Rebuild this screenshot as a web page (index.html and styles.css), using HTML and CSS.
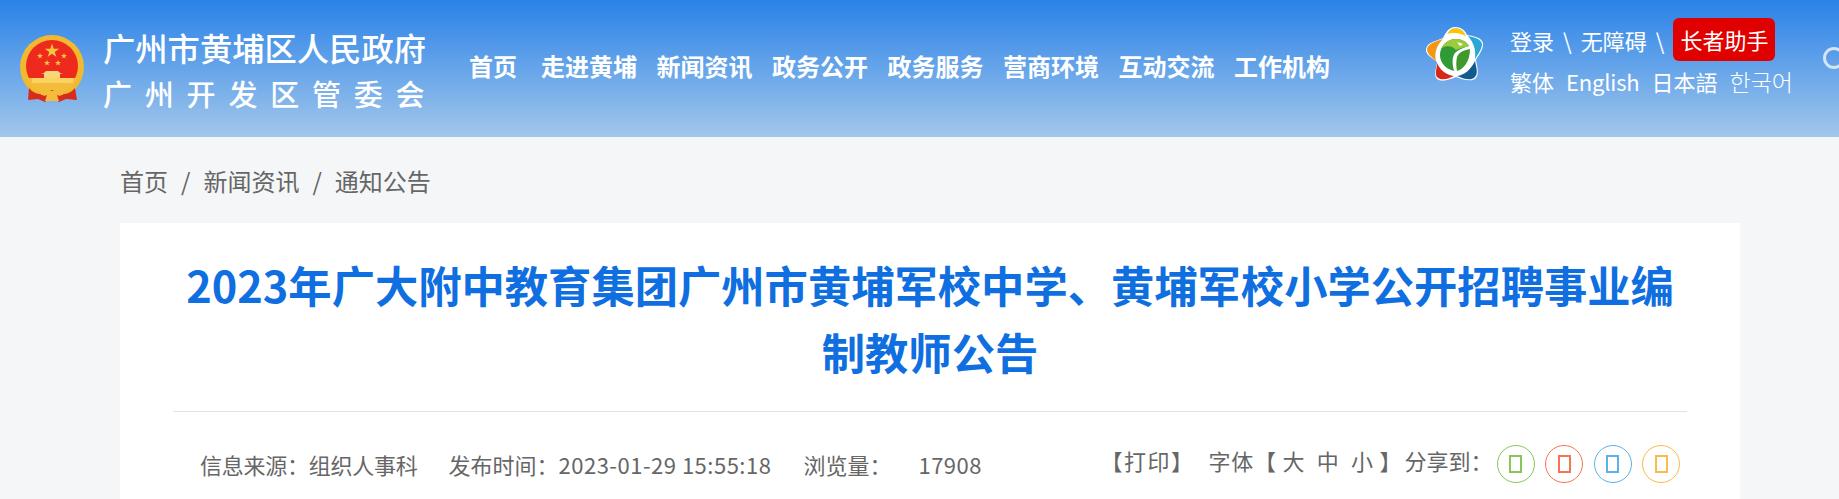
FILE: index.html
```html
<!DOCTYPE html>
<html lang="zh-CN">
<head>
    <meta charset="UTF-8">
    <meta name="viewport" content="width=device-width, initial-scale=1.0">
    <title>2023年广大附中教育集团广州市黄埔军校中学、黄埔军校小学公开招聘事业编制教师公告</title>
    <link rel="stylesheet" href="styles.css">
</head>
<body>
    <header class="header">
        <svg class="emblem" viewBox="5 5 66 72" aria-hidden="true">
            <defs>
                <polygon id="star" points="0,-1 .225,-.309 .951,-.309 .363,.118 .588,.809 0,.382 -.588,.809 -.363,.118 -.951,-.309 -.225,-.309"/>
            </defs>
            <circle cx="37" cy="37" r="32" fill="#f0b92f"/>
            <circle cx="37" cy="36" r="26" fill="#ee2a1e"/>
            <path d="M11 48 Q14 56 22 60 Q37 66 52 60 Q60 56 63 48 Z" fill="#f3bd3b"/>
            <path d="M29 48 V44 L26 43 H29 L31 41 H43 L45 43 H48 L45 44 V48 Z" fill="#f8d77a"/>
            <path d="M17 48 H58 V53 H17 Z" fill="#f9d25f"/>
            <path d="M14 58 L13 70 L23 69 L30 72 L37 67 L44 72 L51 69 L62 70 L60 58 Q55 64 48 64 L37 60 L26 64 Q19 64 14 58 Z" fill="#d92b1c"/>
            <path d="M24 63 Q31 58 37 61 Q43 58 50 63 Q46 67 42 65 L44 71 H30 L32 65 Q28 67 24 63 Z" fill="#f3bd3b"/>
            <use href="#star" fill="#f7c740" transform="translate(37 21) scale(7.5)"/>
            <use href="#star" fill="#f7c740" transform="translate(25 26) scale(3.2)"/>
            <use href="#star" fill="#f7c740" transform="translate(49 26) scale(3.2)"/>
            <use href="#star" fill="#f7c740" transform="translate(32 33) scale(3.2)"/>
            <use href="#star" fill="#f7c740" transform="translate(43 33) scale(3.2)"/>
        </svg>
        <div class="site-name">
            <div class="site-name-top">广州市黄埔区人民政府</div>
            <div class="site-name-bottom">广州开发区管委会</div>
        </div>
        <nav class="nav">
            <a class="nav-home">首页</a>
            <a>走进黄埔</a>
            <a>新闻资讯</a>
            <a>政务公开</a>
            <a>政务服务</a>
            <a>营商环境</a>
            <a>互动交流</a>
            <a>工作机构</a>
        </nav>
        <svg class="flower" viewBox="5 7 62 60" aria-hidden="true">
            <path d="M36 8 C42 8 46 11 48 16 C54 17 62 18 64 24 C65 30 59 37 57 41 C58 47 61 56 56 60 C51 63 42 60 37 58 C32 60 23 64 18 60 C14 56 18 47 18 43 C14 39 6 36 7 30 C8 23 18 22 24 19 C27 13 30 8 36 8 Z" fill="#fff"/>
            <path d="M28 15 C30 11 33 9 36 9 C42 9 45 12 47 17 C41 14 34 13 28 15 Z" fill="#f8c414"/>
            <path d="M24 20 C18 22 9 24 8 30 C8 35 13 38 17 42 C15 33 18 26 24 20 Z" fill="#f49813"/>
            <path d="M49 17 C55 18 62 20 63 25 C63 30 59 35 56 40 C57 31 55 24 49 17 Z" fill="#27a8d8"/>
            <path d="M18 44 C18 50 15 56 19 59 C24 62 31 59 35 57 C27 56 21 51 18 44 Z" fill="#d8261c"/>
            <path d="M56 42 C57 48 60 55 55 59 C50 62 43 59 38 57 C46 56 52 50 56 42 Z" fill="#0f5b8f"/>
            <path d="M37 20 C27 20 21 28 21 36 C21 44 27 50 35 52 C33 44 33 38 36 34 C40 30 46 28 50 27 C48 23 43 20 37 20 Z" fill="#2f9a36"/>
            <path d="M37 20 C30 20 25 24 23 29 C28 26 34 27 37 31 C41 29 46 28 50 27 C48 23 43 20 37 20 Z" fill="#9ccb3c"/>
            <path d="M51 30 C45 31 40 33 38 38 C37 43 37 47 38 52 C45 50 51 42 51 30 Z" fill="#3f9a2e"/>
            <path d="M38 23 L44 25 L41 27 Z" fill="#fff"/>
        </svg>
        <div class="tools">
            <div class="tools-row">
                <a>登录</a><span class="sep">\</span><a>无障碍</a><span class="sep">\</span><a class="elder">长者助手</a>
            </div>
            <div class="tools-row tools-lang">
                <a>繁体</a><a class="english">English</a><a>日本語</a><a class="korean" lang="ko">한국어</a>
            </div>
        </div>
        <div class="search-icon"></div>
    </header>

    <main class="main">
        <div class="crumbs">
            <a>首页</a><span>/</span><a>新闻资讯</a><span>/</span><a>通知公告</a>
        </div>
        <article class="card">
            <h1 class="title">2023年广大附中教育集团广州市黄埔军校中学、黄埔军校小学公开招聘事业编制教师公告</h1>
            <div class="meta">
                <div class="meta-info">
                    <span class="meta-source">信息来源：组织人事科</span>
                    <span class="meta-time">发布时间：<span class="digits">2023-01-29 15:55:18</span></span>
                    <span class="meta-views">浏览量：</span>
                    <span class="meta-count digits">17908</span>
                </div>
                <div class="meta-tools">
                    <span class="print">【打印】</span>
                    <span class="size">字体【 大&nbsp;&nbsp;中&nbsp;&nbsp;小 】</span>
                    <span class="share">分享到：</span>
                    <a class="share-btn green"><i></i></a>
                    <a class="share-btn red"><i></i></a>
                    <a class="share-btn blue"><i></i></a>
                    <a class="share-btn orange"><i></i></a>
                </div>
            </div>
        </article>
    </main>
</body>
</html>
```

FILE: styles.css
```css
html, body {
    margin: 0;
    padding: 0;
    height: 100%;
    overflow: hidden;
}
body {
    font-family: "Noto Sans CJK SC", "Noto Sans", sans-serif;
    background-color: #f5f6f8;
    color: #666;
}
.header {
    display: flex;
    align-items: center;
    height: 137px;
    padding-left: 20px;
    background: linear-gradient(#2a82e8, #a2c7eb);
    color: #fff;
    white-space: nowrap;
}
.emblem {
    flex: none;
    width: 66px;
    height: 72px;
    margin-top: 4px;
}
.site-name {
    flex: none;
    width: 322px;
    margin-left: 17px;
    font-weight: 500;
}
.site-name-top {
    font-size: 32.3px;
    line-height: 48px;
}
.site-name-bottom {
    font-size: 29px;
    line-height: 44px;
    letter-spacing: 12.8px;
}
.nav {
    flex: none;
    display: flex;
    gap: 19.5px;
    margin-left: 44px;
    font-size: 24px;
    font-weight: 700;
    line-height: 36px;
    margin-top: -6px;
}
.nav-home {
    margin-right: 4.6px;
}
.flower {
    flex: none;
    width: 62px;
    height: 60px;
    margin-left: 94px;
    margin-top: -25px;
}
.tools {
    flex: none;
    margin-left: 24px;
    width: 313px;
    font-size: 22px;
    margin-top: -21px;
}
.tools-row {
    display: flex;
    align-items: center;
    height: 44px;
}
.sep {
    margin: 0 9px;
}
.elder {
    padding: 0 7px;
    line-height: 43px;
    background-color: #e00000;
    border-radius: 6px;
}
.tools-lang {
    gap: 12px;
    height: 36px;
    margin-top: 1px;
}
.english {
    letter-spacing: -0.2px;
}
.korean {
    font-family: "Noto Sans CJK KR", sans-serif;
    font-size: 23px;
    font-weight: 300;
}
.search-icon {
    flex: none;
    width: 16px;
    height: 16px;
    margin-top: -22px;
    border: 3px solid #d5e5f6;
    border-radius: 50%;
}
.main {
    padding: 0 99px 0 120px;
}
.crumbs {
    display: flex;
    gap: 13px;
    height: 86px;
    align-items: center;
    font-size: 24px;
}
.card {
    background-color: #fff;
    padding: 28px 53px 0;
    min-height: 400px;
}
.title {
    margin: 0;
    padding-bottom: 26px;
    border-bottom: 1px solid #e2e2e2;
    color: #0f6fe0;
    font-size: 43.3px;
    font-weight: 700;
    line-height: 67px;
    text-align: center;
}
.meta {
    display: flex;
    justify-content: space-between;
    align-items: center;
    padding: 32px 7px 0 27px;
    font-size: 22px;
}
.meta-info {
    display: flex;
}
.meta-source {
    letter-spacing: -0.25px;
}
.digits {
    letter-spacing: 0.5px;
}
.meta-time {
    margin-left: 31px;
}
.meta-views {
    margin-left: 32px;
}
.meta-count {
    margin-left: 27px;
}
.meta-tools {
    display: flex;
    align-items: center;
}
.print, .size, .share {
    padding-bottom: 8px;
}
.print {
    letter-spacing: 1.5px;
}
.size {
    margin-left: 14px;
    letter-spacing: 0.8px;
}
.share {
    margin-left: 2px;
    margin-right: -6px;
}
.share-btn {
    display: flex;
    justify-content: center;
    align-items: center;
    width: 36px;
    height: 36px;
    margin-left: 10.4px;
    border: 1px solid;
    border-radius: 50%;
}
.share-btn i {
    display: block;
    width: 9px;
    height: 14px;
    border: 2px solid;
}
.green {
    color: #86c757;
}
.red {
    color: #f4754e;
}
.blue {
    color: #5cb1ea;
}
.orange {
    color: #f9bc4a;
}
```
